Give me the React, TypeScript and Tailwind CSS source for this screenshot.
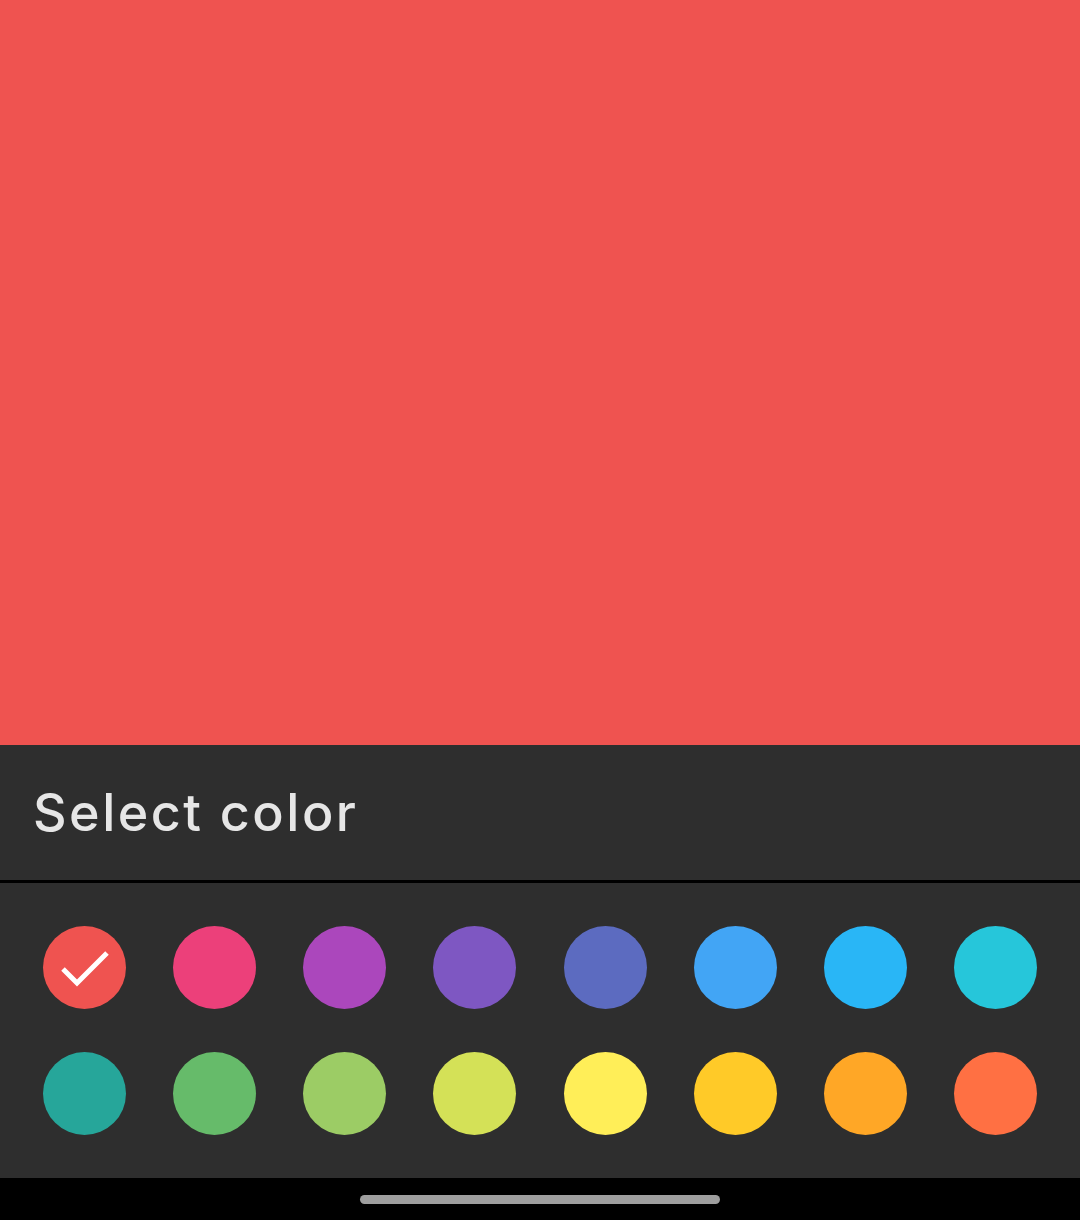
const swatches = [
  '#ef5350', '#ec407a', '#ab47bc', '#7e57c2', '#5c6bc0', '#42a5f5', '#29b6f6', '#26c6da',
  '#26a69a', '#66bb6a', '#9ccc65', '#d4e157', '#ffee58', '#ffca28', '#ffa726', '#ff7043',
];

function Swatch({ color, selected }: { color: string; selected?: boolean }) {
  return (
    <div className="w-[83px] h-[83px] rounded-full flex items-center justify-center" style={{ backgroundColor: color }}>
      {selected && (
        <svg width="83" height="83" viewBox="0 0 83 83">
          <path d="M20 43 L34 57 L64 27" fill="none" stroke="#ffffff" strokeWidth="5" strokeLinecap="butt" strokeLinejoin="miter" />
        </svg>
      )}
    </div>
  );
}

export default function App() {
  const rows = [swatches.slice(0, 8), swatches.slice(8)];
  return (
    <div className="w-[1080px] h-[1220px] flex flex-col bg-black" style={{ fontFamily: 'Inter, "Noto Sans", sans-serif' }}>
      <div className="h-[745px] bg-[#ef5350]" />
      <div className="h-[135px] bg-[#2e2e2e] flex items-center px-[33px]">
        <h1 className="text-[52px] leading-none text-[#e6e6e6] font-medium tracking-[2.5px]">Select color</h1>
      </div>
      <div className="h-[3px] bg-black" />
      <div className="bg-[#2e2e2e] p-[43px] flex flex-col gap-[43px]">
        {rows.map((row, r) => (
          <div key={r} className="flex justify-between">
            {row.map((c, i) => (
              <Swatch key={c} color={c} selected={r === 0 && i === 0} />
            ))}
          </div>
        ))}
      </div>
      <div className="flex-1 flex items-start justify-center pt-[17px]">
        <div className="w-[360px] h-[9px] rounded-full bg-[#9e9e9e]" />
      </div>
    </div>
  );
}
